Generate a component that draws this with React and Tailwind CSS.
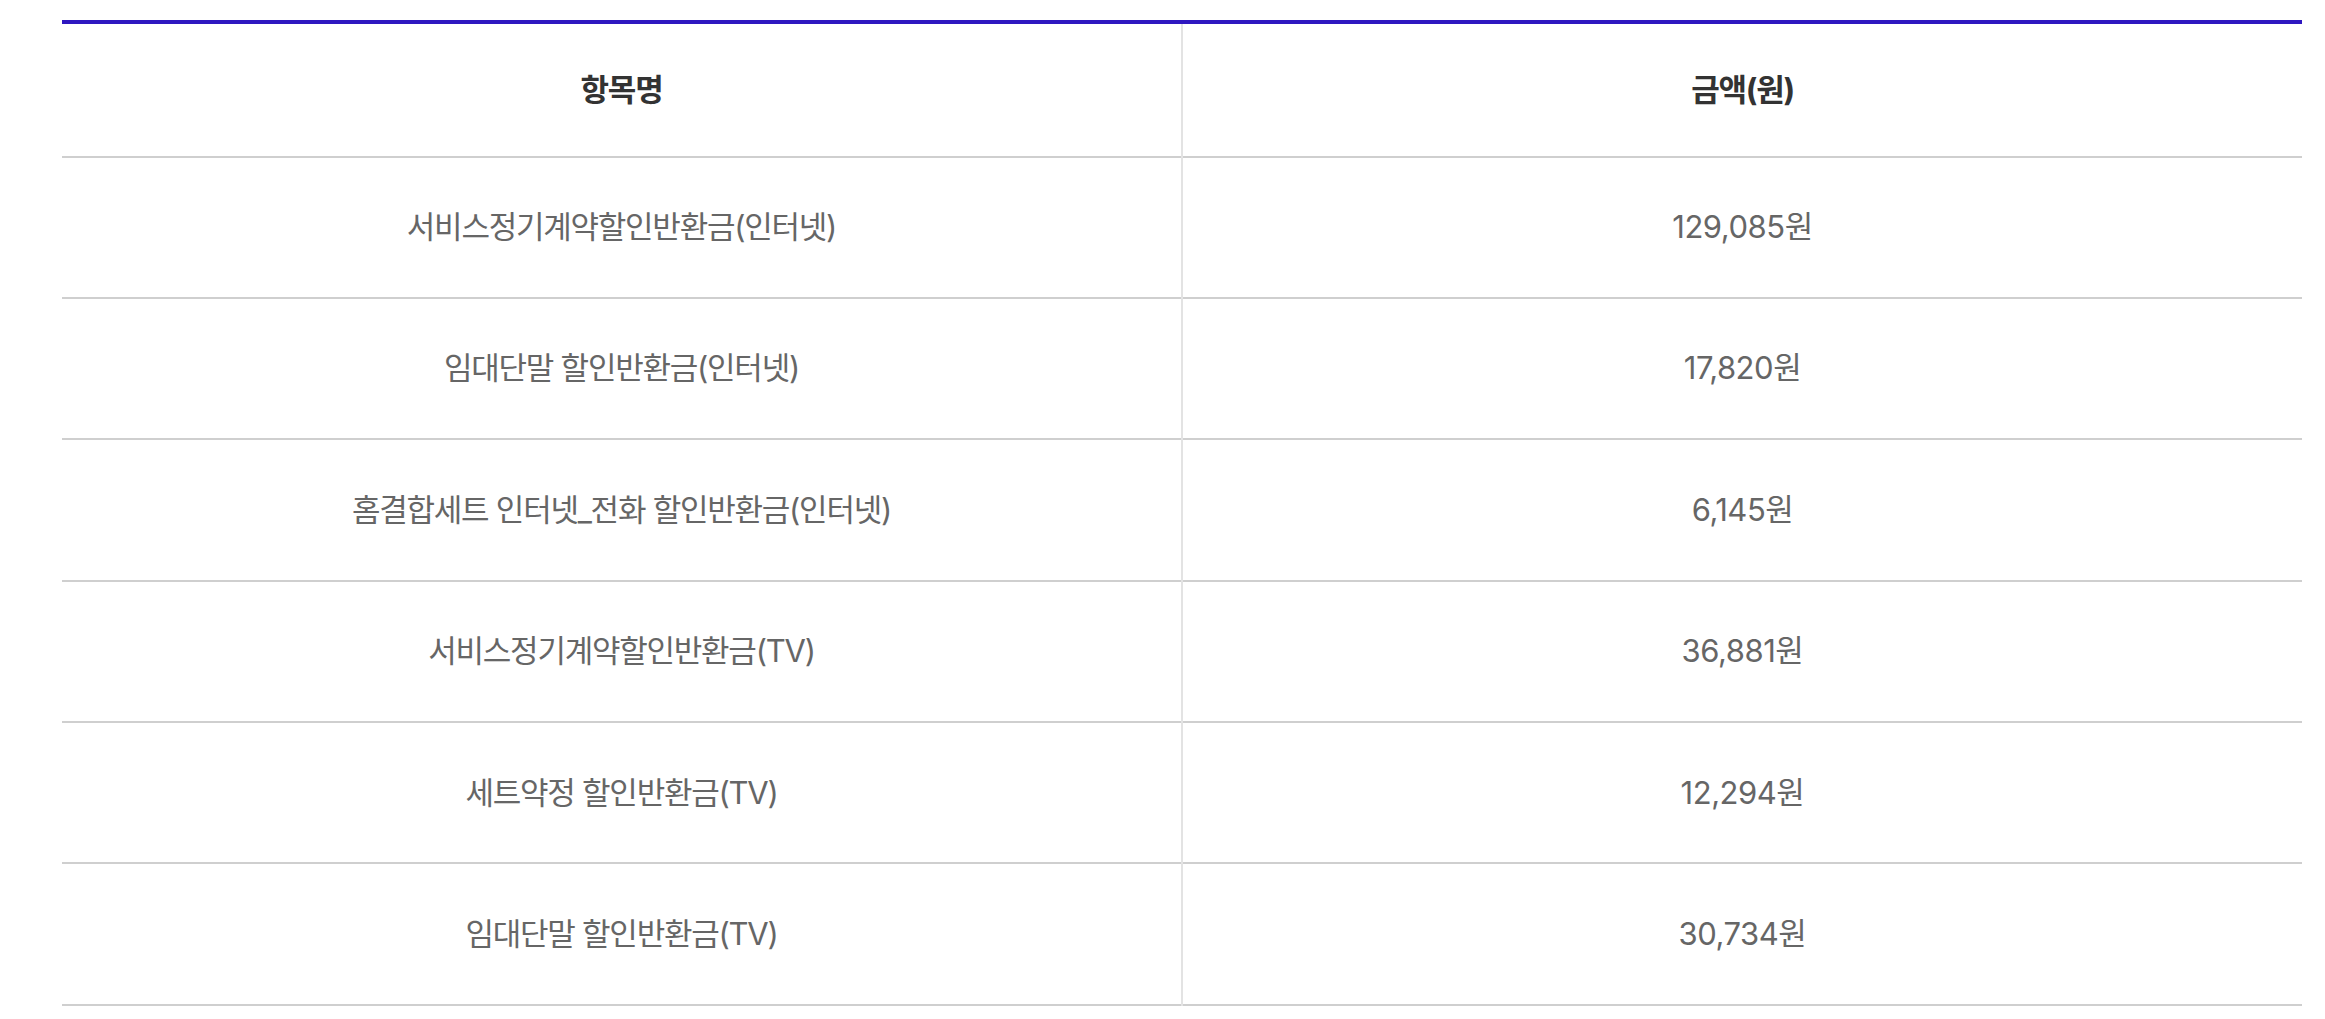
const rows = [
  ['서비스정기계약할인반환금(인터넷)', '129,085원'],
  ['임대단말 할인반환금(인터넷)', '17,820원'],
  ['홈결합세트 인터넷_전화 할인반환금(인터넷)', '6,145원'],
  ['서비스정기계약할인반환금(TV)', '36,881원'],
  ['세트약정 할인반환금(TV)', '12,294원'],
  ['임대단말 할인반환금(TV)', '30,734원'],
]

export default function App() {
  return (
    <div className="min-h-screen bg-white px-[62px] pt-[20px] font-['Inter','Noto_Sans_CJK_KR',sans-serif]">
      <table className="w-[2240px] table-fixed border-collapse border-t-4 border-[#2e17c0]">
        <thead>
          <tr className="h-[134.5px] border-b-2 border-[#cfcfcf]">
            <th className="w-1/2 border-r-2 border-[#e3e3e3] text-[31px] font-bold tracking-[-0.04em] text-[#333]">항목명</th>
            <th className="w-1/2 text-[31px] font-bold tracking-[-0.04em] text-[#333]">금액(원)</th>
          </tr>
        </thead>
        <tbody>
          {rows.map(([name, amount]) => (
            <tr key={name} className="h-[141.4px] border-b-2 border-[#cfcfcf]">
              <td className="border-r-2 border-[#e3e3e3] text-center text-[31px] tracking-[-0.04em] text-[#666]">{name}</td>
              <td className="text-center text-[31px] tracking-[-0.015em] text-[#666]">{amount}</td>
            </tr>
          ))}
        </tbody>
      </table>
    </div>
  )
}
